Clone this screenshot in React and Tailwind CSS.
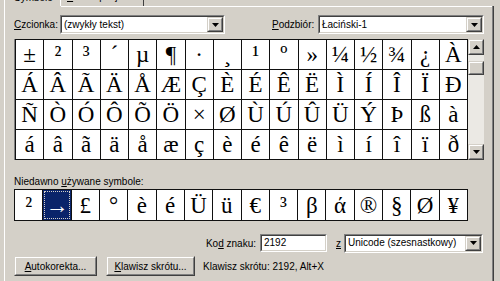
import React from "react";

const rows = [
  "± ² ³ ´ µ ¶ · ¸ ¹ º » ¼ ½ ¾ ¿ À".split(" "),
  "Á Â Ã Ä Å Æ Ç È É Ê Ë Ì Í Î Ï Ð".split(" "),
  "Ñ Ò Ó Ô Õ Ö × Ø Ù Ú Û Ü Ý Þ ß à".split(" "),
  "á â ã ä å æ ç è é ê ë ì í î ï ð".split(" "),
];
const recent = "² → £ ° è é Ü ü € ³ β ά ® § Ø ¥".split(" ");

function Raised({ className = "", children }) {
  return (
    <div className={"border border-t-[#d4d0c8] border-l-[#d4d0c8] border-b-[#404040] border-r-[#404040] " + className}>
      <div className="w-full h-full border border-t-white border-l-white border-b-[#808080] border-r-[#808080] bg-[#d4d0c8] flex items-center justify-center whitespace-nowrap">
        {children}
      </div>
    </div>
  );
}

function Sunken({ className = "", children }) {
  return (
    <div className={"border border-t-[#808080] border-l-[#808080] border-b-white border-r-white " + className}>
      <div className="w-full h-full border border-t-[#404040] border-l-[#404040] border-b-[#d4d0c8] border-r-[#d4d0c8] bg-white flex items-center overflow-hidden">
        {children}
      </div>
    </div>
  );
}

function Arrow({ up }) {
  return (
    <svg width="7" height="4" viewBox="0 0 7 4">
      {up ? <path d="M3.5 0 L7 4 L0 4 Z" fill="#000" /> : <path d="M0 0 L7 0 L3.5 4 Z" fill="#000" />}
    </svg>
  );
}

function Select({ width, text }) {
  return (
    <Sunken className={"h-[19px] shrink-0 " + width}>
      <span className="flex-1 pl-[2px] leading-none text-black whitespace-nowrap overflow-hidden">{text}</span>
      <Raised className="w-[16px] h-[15px] shrink-0">
        <Arrow />
      </Raised>
    </Sunken>
  );
}

export default function App() {
  return (
    <div className="w-[500px] h-[281px] bg-[#d4d0c8] overflow-hidden font-['Liberation_Sans',Arial,sans-serif] text-[10px] text-black whitespace-nowrap">
      {/* tabs strip */}
      <div className="flex h-[6px] overflow-hidden pl-[4px]">
        <div className="w-[56px] h-[6px] border-l border-white relative shrink-0">
          <span className="absolute left-[9px] top-[-8px] leading-[12px]">Symbole</span>
        </div>
        <div className="w-[84px] h-[6px] border-l border-white border-r border-r-[#404040] relative shrink-0">
          <span className="absolute left-[6px] top-[-9px] leading-[12px]">
            <span className="underline">Z</span>naki specjalne
          </span>
        </div>
      </div>
      {/* panel */}
      <div className="ml-[4px] w-[490px] h-[275px] border-l border-white border-r border-r-[#404040] relative">
        <div className="absolute left-[56px] top-0 right-0 h-px bg-white" />
        <div className="absolute right-0 top-0 bottom-0 w-px bg-[#808080]" />
        <div className="pl-[9px] pt-[9px]">
          {/* font row */}
          <div className="flex items-center h-[19px]">
            <span className="w-[46px] shrink-0"><span className="underline">C</span>zcionka:</span>
            <Select width="w-[165px]" text="(zwykły tekst)" />
            <span className="ml-[47px] w-[46px] shrink-0"><span className="underline">P</span>odzbiór:</span>
            <Select width="w-[166px]" text="Łaciński-1" />
          </div>
          {/* grid */}
          <div className="flex mt-[5px]">
            <div className="w-[454px] h-[121px] bg-[#111] p-px grid grid-cols-[repeat(16,minmax(0,1fr))] grid-rows-4 gap-px border-l border-l-[#808080]">
              {rows.flat().map((c, i) => (
                <div key={i} className="bg-white flex items-center justify-center font-['Liberation_Serif','Times_New_Roman',serif] text-[23px] leading-none">
                  {c}
                </div>
              ))}
            </div>
            <div className="w-[16px] h-[121px] bg-[#ebe9e4] flex flex-col">
              <Raised className="w-[16px] h-[16px]"><Arrow up /></Raised>
              <Raised className="w-[16px] h-[14px] mt-[6px]" />
              <div className="flex-1" />
              <Raised className="w-[16px] h-[16px]"><Arrow /></Raised>
            </div>
          </div>
          {/* recent */}
          <div className="mt-[15px] leading-[13px]">
            Niedawno <span className="underline">u</span>żywane symbole:
          </div>
          <div className="mt-px w-[454px] h-[32px] bg-[#111] p-px grid grid-cols-[repeat(16,minmax(0,1fr))] gap-px">
            {recent.map((c, i) => (
              <div
                key={i}
                className={
                  "flex items-center justify-center font-['Liberation_Serif','Times_New_Roman',serif] text-[23px] leading-none " +
                  (i === 1 ? "bg-[#0a246a] text-white outline outline-1 outline-dotted outline-[#d4d0c8] -outline-offset-2" : "bg-white")
                }
              >
                {c}
              </div>
            ))}
          </div>
          {/* code row */}
          <div className="flex items-center justify-end w-[469px] h-[18px] mt-[13px]">
            <span className="mr-[4px]">Ko<span className="underline">d</span> znaku:</span>
            <Sunken className="w-[67px] h-[18px] shrink-0">
              <span className="pl-[2px] leading-none">2192</span>
            </Sunken>
            <span className="ml-[9px] mr-[3px] underline">z</span>
            <Select width="w-[139px]" text="Unicode (szesnastkowy)" />
          </div>
          {/* buttons row */}
          <div className="flex items-center h-[20px] mt-[4px]">
            <Raised className="w-[83px] h-[20px] shrink-0">
              <span><span className="underline">A</span>utokorekta...</span>
            </Raised>
            <Raised className="w-[89px] h-[20px] ml-[9px] shrink-0">
              <span><span className="underline">K</span>lawisz skrótu...</span>
            </Raised>
            <span className="ml-[8px]">Klawisz skrótu: 2192, Alt+X</span>
          </div>
        </div>
      </div>
    </div>
  );
}
